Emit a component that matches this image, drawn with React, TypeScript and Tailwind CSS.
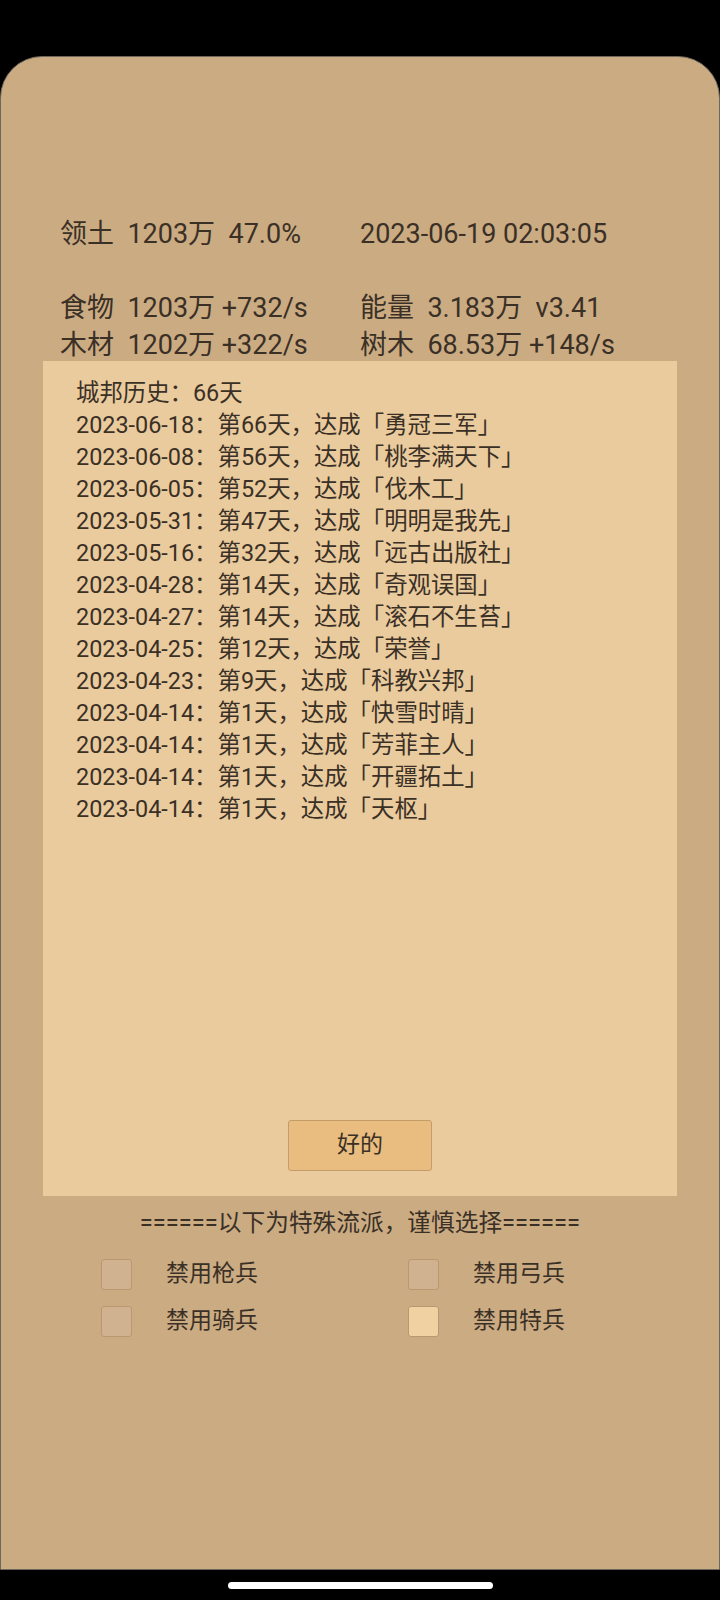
import type { ReactNode } from "react";

const font = "font-['Roboto','Noto_Sans_CJK_SC',sans-serif]";

const history: [string, string, string][] = [
  ["2023-06-18", "第66天", "勇冠三军"],
  ["2023-06-08", "第56天", "桃李满天下"],
  ["2023-06-05", "第52天", "伐木工"],
  ["2023-05-31", "第47天", "明明是我先"],
  ["2023-05-16", "第32天", "远古出版社"],
  ["2023-04-28", "第14天", "奇观误国"],
  ["2023-04-27", "第14天", "滚石不生苔"],
  ["2023-04-25", "第12天", "荣誉"],
  ["2023-04-23", "第9天", "科教兴邦"],
  ["2023-04-14", "第1天", "快雪时晴"],
  ["2023-04-14", "第1天", "芳菲主人"],
  ["2023-04-14", "第1天", "开疆拓土"],
  ["2023-04-14", "第1天", "天枢"],
];

function StatRow({ left, right, className = "" }: { left: string; right: string; className?: string }) {
  return (
    <div className={`flex h-[37px] items-center whitespace-pre text-[27px] leading-[37px] ${className}`}>
      <span className="w-[300px] shrink-0">{left}</span>
      <span>{right}</span>
    </div>
  );
}

function Check({ label, checked }: { label: string; checked?: boolean }): ReactNode {
  return (
    <div className="flex h-[47px] items-center">
      <span
        className={`h-[31px] w-[31px] shrink-0 rounded-[3px] border border-[#b89870] ${
          checked ? "bg-[#efd1a2]" : "bg-[#d0b290]"
        }`}
      />
      <span className="ml-[34px] text-[23px]">{label}</span>
    </div>
  );
}

export default function App() {
  return (
    <div className={`relative flex h-[1600px] w-[720px] flex-col bg-black ${font} text-[#3a3026]`}>
      <div className="mt-[56px] flex h-[1514px] flex-col rounded-t-[42px] border border-[#6e665c] bg-[#cbab82] pt-[159px]">
        <div className="pl-[59px]">
          <StatRow left="领土  1203万  47.0%" right="2023-06-19 02:03:05" />
          <StatRow left="食物  1203万 +732/s" right="能量  3.183万  v3.41" className="mt-[37px]" />
          <StatRow left="木材  1202万 +322/s" right="树木  68.53万 +148/s" />
        </div>

        <div className="mx-[42px] mt-[-3px] flex h-[835px] flex-col bg-[#eacb9d] pl-[33px] pt-[16px] pb-[25px]">
          <div className="text-[23.4px] leading-[32px]">
            <div>城邦历史：66天</div>
            {history.map(([d, n, t], i) => (
              <div key={i} className="whitespace-pre">
                {d}：{n}，达成「{t}」
              </div>
            ))}
          </div>
          <div className="mt-auto flex justify-center pr-[33px]">
            <button className="h-[51px] w-[144px] rounded-[3px] border border-[#c39c69] bg-[#e8bd7f] text-[23px] text-[#3a3026]">
              好的
            </button>
          </div>
        </div>

        <div className="mt-[11px] text-center text-[23.7px] leading-[32px]">======以下为特殊流派，谨慎选择======</div>

        <div className="mt-[12px] grid grid-cols-[307px_307px] pl-[100px]">
          <Check label="禁用枪兵" />
          <Check label="禁用弓兵" />
          <Check label="禁用骑兵" />
          <Check label="禁用特兵" checked />
        </div>
      </div>

      <div className="mt-[12px] flex justify-center">
        <div className="h-[7px] w-[265px] rounded-full bg-white" />
      </div>
    </div>
  );
}
